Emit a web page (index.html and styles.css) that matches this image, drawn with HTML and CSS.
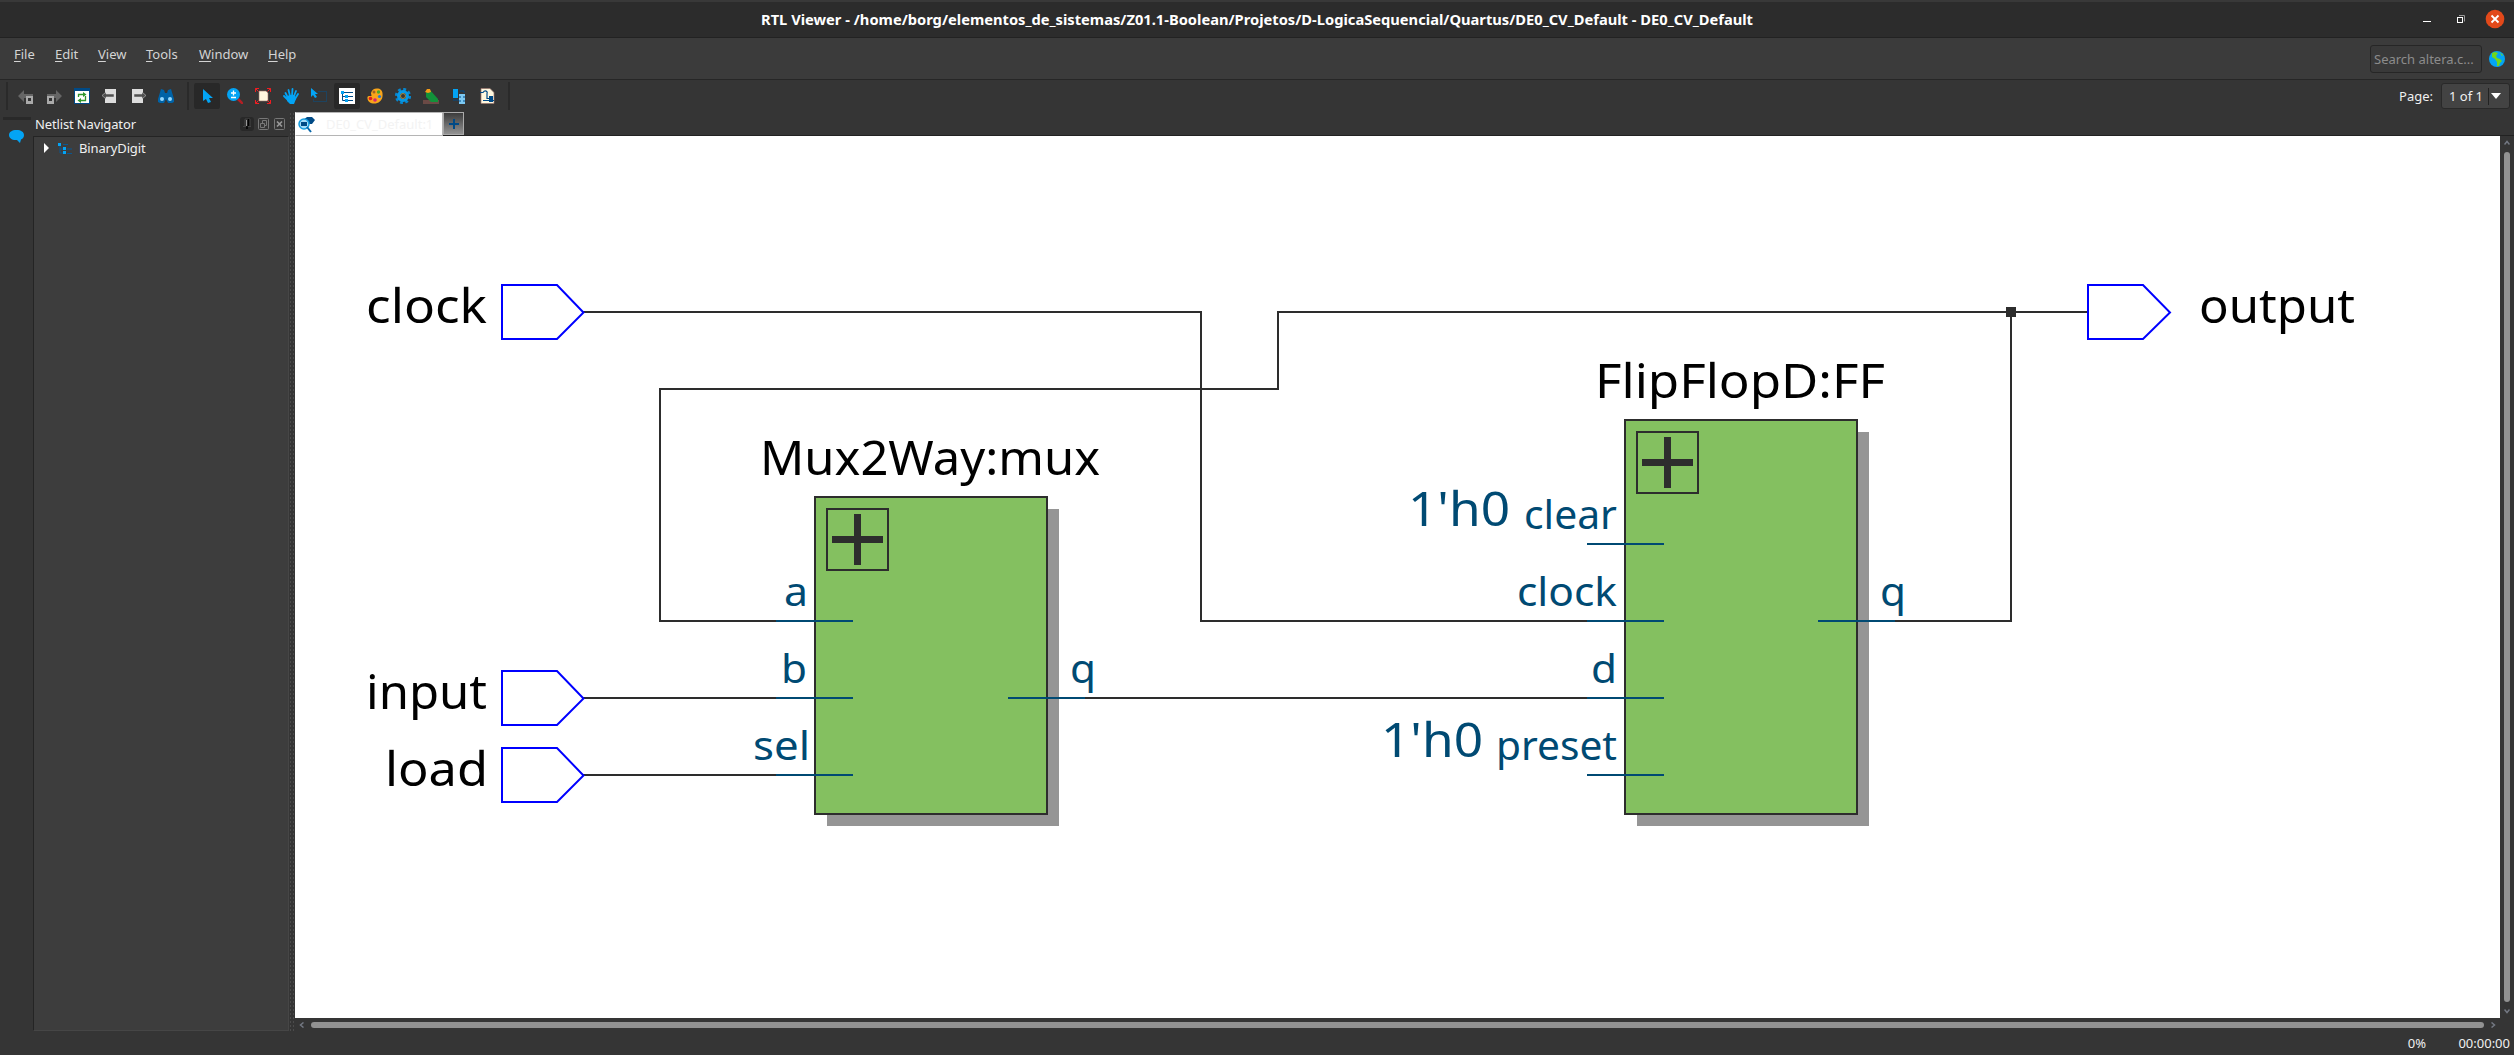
FILE: index.html
```html
<!DOCTYPE html>
<html lang="en">
<head>
<meta charset="utf-8">
<title>RTL Viewer</title>
<link rel="stylesheet" href="styles.css">
</head>
<body>
<header class="titlebar">
  <svg class="title-text" width="1000" height="34"><text x="4" y="23" textLength="992" lengthAdjust="spacingAndGlyphs">RTL Viewer - /home/borg/elementos_de_sistemas/Z01.1-Boolean/Projetos/D-LogicaSequencial/Quartus/DE0_CV_Default - DE0_CV_Default</text></svg>
  <svg class="window-buttons" width="96" height="34" viewBox="0 0 96 34">
    <path d="M5 19.500h8" stroke="#fff"/>
    <path d="M41 13.500h5.500v6" fill="none" stroke="#999"/>
    <rect x="39.500" y="15.500" width="5" height="5" fill="none" stroke="#fff"/>
    <circle cx="77" cy="17" r="9.300" fill="#e2491a"/>
    <path d="M73.500 13.500l7 7m0-7l-7 7" stroke="#fff" stroke-width="1.800"/>
  </svg>
</header>
<nav class="menubar">
  <div class="menus">
    <span class="menu m-file"><u>F</u>ile</span><span class="menu m-edit"><u>E</u>dit</span><span class="menu m-view"><u>V</u>iew</span><span class="menu m-tools"><u>T</u>ools</span><span class="menu m-window"><u>W</u>indow</span><span class="menu m-help"><u>H</u>elp</span>
  </div>
  <div class="search">Search altera.c...</div>
  <svg class="globe" width="16" height="16" viewBox="0 0 16 16"><circle cx="8" cy="8" r="8" fill="#03a4f5"/><path d="M3 2l3-1 3 1-2 3 1 2 3 1 2 2-2 2-1 3-2 0 0-4-2-3-3-2zM11 1.500l3 2.500-1 1z" fill="#6fd71c"/></svg>
</nav>
<div class="toolbar">
  <i class="sep"></i>
  <div class="tools">
    <span class="tool"><svg viewBox="0 0 16 16"><path d="M0 8l6-6v4h9v8H8v-4H6v4z" fill="#666"/><path d="M8 8h7v8H8z" fill="#aaa"/><path d="M10 10h3v3h-3z" fill="#333"/></svg></span>
    <span class="tool"><svg viewBox="0 0 16 16"><path d="M16 8l-6-6v4H1v8h7v-4h2v4z" fill="#666"/><path d="M1 8h7v8H1z" fill="#aaa"/><path d="M3 10h3v3H3z" fill="#333"/></svg></span>
    <span class="tool"><svg viewBox="0 0 16 16"><path d="M0 0h16v16H0z" fill="#004a86"/><path d="M1 3h14v12H1z" fill="#fff"/><path d="M4.500 9V6.500h6M11.500 8v4.500h-6" fill="none" stroke="#2f962c" stroke-width="1.300"/><path d="M9 4l3.500 2.500L9 9zM7 10l-3.500 2.500L7 15z" fill="#2f962c"/></svg></span>
    <span class="tool"><svg viewBox="0 0 16 16"><path d="M3 1h11v14H3z" fill="#ddd"/><path d="M0 7.500l4-3.500v2h8v3H4v2z" fill="#505050" stroke="#ddd" stroke-width=".5"/></svg></span>
    <span class="tool"><svg viewBox="0 0 16 16"><path d="M2 1h11v14H2z" fill="#ddd"/><path d="M16 7.500L12 4v2H4v3h8v2z" fill="#505050" stroke="#ddd" stroke-width=".5"/></svg></span>
    <span class="tool"><svg viewBox="0 0 16 16"><path d="M3 1l3 1 1 3h2l1-3 3-1 3 10v3l-2 1h-4l-2-4-2 4H2l-2-1v-3z" fill="#0063a7"/><circle cx="4" cy="11" r="2" fill="#93d8ff"/><circle cx="12" cy="11" r="2" fill="#93d8ff"/></svg></span>
  </div>
  <i class="sep"></i>
  <div class="tools">
    <span class="tool on"><svg viewBox="0 0 16 16"><path d="M4 1v12l3-2 2 4 3-1-2-4h4z" fill="#03a4f5"/></svg></span>
    <span class="tool"><svg viewBox="0 0 16 16"><path d="M11 11l5 5" stroke="#b51f24" stroke-width="2.500"/><circle cx="6.500" cy="6.500" r="6.500" fill="#03a4f5"/><path d="M6.500 2.500v5M4 5h5M4 9.500h5" stroke="#fff" stroke-width="1.300"/></svg></span>
    <span class="tool"><svg viewBox="0 0 16 16"><path d="M4 3h7l2 2v8H4z" fill="#fff8df" stroke="#9a746a" stroke-width=".6"/><path d="M.5 4V.5H4M.5.500l3 3M12 .5h3.500V4m0-3.500l-3 3M.5 12v3.500H4m-3.500 0l3-3m8.500 3h3.500V12m0 3.500l-3-3" fill="none" stroke="#f01d22"/></svg></span>
    <span class="tool"><svg viewBox="0 0 16 16"><path d="M5 10L2.500 5M7 8L5.500 2M9 8l.5-7M11 8l2-5M12 11l3-5M5 12L1 8" stroke="#03a4f5" stroke-width="1.800" stroke-linecap="round"/><path d="M4 9l2-2h6l1 4-2 5H7l-3-3z" fill="#03a4f5"/></svg></span>
    <span class="tool"><svg viewBox="0 0 16 16"><path d="M0 0v9l2-2 2 3 2-1-2-3h3z" fill="#03a4f5"/><path d="M7.500 3.500h8v10h-13v-3" fill="none" stroke="#07538a" stroke-dasharray="1 1"/></svg></span>
    <span class="tool on"><svg viewBox="0 0 16 16"><path d="M0 0h16v16H0z" fill="#fff"/><path d="M3.500 4v8.500H7M3.500 8.500H7M5 4.500h9M9 8.500h5M9 12.500h5" fill="none" stroke="#004a86"/><path d="M2 3h3v3H2zM6 7h3v3H6zM6 11h3v3H6z" fill="#03a4f5"/></svg></span>
    <span class="tool"><svg viewBox="0 0 16 16"><path d="M4 5C5 1 8 0 11 .5c4 .5 5 4 4.500 8C15 13 11 16 6 15.500 2 15 0 12 .5 9c1-2 4 0 4-1.500C4.500 7 4 6 4 5z" fill="#f9a51a"/><circle cx="3.500" cy="10.500" r="1.800" fill="#e02020"/><circle cx="7" cy="4" r="1.500" fill="#a06324"/><circle cx="11.500" cy="4" r="1.700" fill="#45a92c"/><circle cx="12.500" cy="8.500" r="1.600" fill="#287ad0"/><circle cx="8" cy="12" r="1.800" fill="#d62376"/></svg></span>
    <span class="tool"><svg viewBox="0 0 16 16"><circle cx="8" cy="8" r="6.600" fill="none" stroke="#0687cf" stroke-width="3" stroke-dasharray="2.800 2.384"/><circle cx="8" cy="8" r="4.500" fill="#353535" stroke="#0697e5" stroke-width="3"/><circle cx="8" cy="8" r="2.500" fill="none" stroke="#a88b3f"/></svg></span>
    <span class="tool"><svg viewBox="0 0 16 16"><path d="M0 12h16v4H0z" fill="#6a4a45"/><path d="M3 3l4-1 8 9v3H8L3 9z" fill="#12923a"/><path d="M2 4l2-3h3l1 3-3 1z" fill="#f59b17"/></svg></span>
    <span class="tool"><svg viewBox="0 0 16 16"><path d="M2 1h5v9H2z" fill="#03a4f5"/><path d="M8 6h6v10H8z" fill="#7cc9f3"/><path d="M2 12h6M9 3h4v2M8 9h2m2 0h2M8 13h2m2 0h2" fill="none" stroke="#004a86"/></svg></span>
    <span class="tool"><svg viewBox="0 0 16 16"><path d="M2 .5h9l4 4v11H2z" fill="#fff8df" stroke="#9a746a" stroke-width=".7"/><path d="M1 4.500h3c2-3 5-1 4 1v5h3M4 12.500h11" fill="none" stroke="#004a86" stroke-width="1.200"/><path d="M10 8h4v6h-4z" fill="#004a86"/></svg></span>
  </div>
  <i class="sep"></i>
  <span class="page-label">Page:</span>
  <div class="page-select"><span>1 of 1</span><i></i><svg width="10" height="6"><path d="M0 0h10L5 6z" fill="#fff"/></svg></div>
</div>
<main class="workspace">
  <aside class="strip"><i></i><svg width="15" height="13" viewBox="0 0 15 13"><path d="M7.500 0C12 0 15 2 15 5c0 2-1 4-3 4.500L11 13 8 10C3 10.500 0 8 0 5s3-5 7.500-5z" fill="#03a4f5"/></svg></aside>
  <section class="dock">
    <div class="dock-head"><span class="dock-title">Netlist Navigator</span>
      <svg class="dock-buttons" width="45" height="14" viewBox="0 0 45 14"><rect width="14" height="14" rx="3" fill="#282828"/><path d="M5 9V2h5v7M3 9.500h8" fill="none" stroke="#444"/><path d="M8.500 2v7M7 9v3" stroke="#000" stroke-width="1.500"/><path d="M6.500 3v6" stroke="#999"/><g fill="none" stroke="#777"><rect x="18.500" y="1.500" width="10" height="11" rx="1"/><path d="M22.500 6V3.500h4v5h-2M20.500 6.500h4v4h-4z"/><rect x="34.500" y="1.500" width="10" height="11" rx="1"/><path d="M37 4.500l5 5m0-5l-5 5" stroke="#999" stroke-width="1.700"/></g></svg>
    </div>
    <div class="tree"><div class="tree-row"><svg width="5" height="10"><path d="M0 0l5 5-5 5z" fill="#fff"/></svg><svg class="tree-icon" width="14" height="12" viewBox="0 0 14 12"><path d="M2 2v8h4M2 6h4M5 1.500h5M9 6h5M9 10.500h5" fill="none" stroke="#0b5790"/><path d="M0 0h3v3H0zM5 4h3v3H5zM5 8h3v3H5z" fill="#03a4f5"/></svg><span class="tree-name">BinaryDigit</span></div></div>
  </section>
  <div class="splitter"></div>
  <section class="viewer">
    <div class="tabs">
      <div class="tab"><svg width="17" height="17" viewBox="0 0 17 17"><path d="M5 4l4-3h5l3 3-3 4H9z" fill="#004a86"/><circle cx="6" cy="8" r="5" fill="#a5dcf8" stroke="#159de0" stroke-width="1.500"/><path d="M3 6h6v4H3z" fill="#004a86"/><path d="M9 11l4 5" stroke="#0867a9" stroke-width="2"/></svg><span>DE0_CV_Default:1</span></div>
      <div class="tab-add"><svg width="10" height="10"><path d="M5 0v10M0 5h10" stroke="#004a86" stroke-width="2"/></svg></div>
    </div>
    <div class="canvas-row">
      <svg class="schematic" width="2205" height="882" viewBox="295 136 2205 882">
        <g class="shadow"><path d="M827 509h232v317H827zM1637 432h232v394h-232z"/></g>
        <g class="wire"><path d="M583 312H1201V621H1588"/><path d="M777 621H660V389H1278V312H2088"/><path d="M583 698H777M583 775H777M1084 698H1588M1894 621H2011V312"/></g>
        <g class="block"><path d="M815 497h232v317H815zM1625 420h232v394h-232z"/></g>
        <g class="expand"><path class="frame" d="M827 509h61v61h-61zM1637 432h61v61h-61z"/><path class="cross" d="M832 539.500h51M857.500 514v51M1642 462.500h51M1667.500 437v51"/></g>
        <path class="pin" d="M776 621h77M776 698h77M776 775h77M1008 698h77M1587 544h77M1587 621h77M1587 698h77M1587 775h77M1818 621h77"/>
        <path class="node" d="M2006 307h10v10h-10z"/>
        <path class="port" d="M502 285h55l26.500 27.500L557 339h-55zM502 671h55l26.500 27.500L557 725h-55zM502 748h55l26.500 27.500L557 802h-55zM2088 285h55l27 27.500L2143 339h-55z"/>
        <g class="name">
          <text x="366" y="323" textLength="121" lengthAdjust="spacingAndGlyphs">clock</text>
          <text x="366" y="709" textLength="121" lengthAdjust="spacingAndGlyphs">input</text>
          <text x="385" y="786" textLength="103" lengthAdjust="spacingAndGlyphs">load</text>
          <text x="760" y="475" textLength="340" lengthAdjust="spacingAndGlyphs">Mux2Way:mux</text>
          <text x="1595" y="398" textLength="290" lengthAdjust="spacingAndGlyphs">FlipFlopD:FF</text>
          <text x="2199" y="323" textLength="156" lengthAdjust="spacingAndGlyphs">output</text>
        </g>
        <g class="const">
          <text x="1408" y="526" textLength="102" lengthAdjust="spacingAndGlyphs">1'h0</text>
          <text x="1381" y="757" textLength="102" lengthAdjust="spacingAndGlyphs">1'h0</text>
        </g>
        <g class="pin-name">
          <text x="784" y="606" textLength="24" lengthAdjust="spacingAndGlyphs">a</text>
          <text x="781" y="683" textLength="26" lengthAdjust="spacingAndGlyphs">b</text>
          <text x="753" y="760" textLength="57" lengthAdjust="spacingAndGlyphs">sel</text>
          <text x="1070" y="683" textLength="26" lengthAdjust="spacingAndGlyphs">q</text>
          <text x="1524" y="529" textLength="93" lengthAdjust="spacingAndGlyphs">clear</text>
          <text x="1517" y="606" textLength="100" lengthAdjust="spacingAndGlyphs">clock</text>
          <text x="1591" y="683" textLength="26" lengthAdjust="spacingAndGlyphs">d</text>
          <text x="1496" y="760" textLength="121" lengthAdjust="spacingAndGlyphs">preset</text>
          <text x="1880" y="606" textLength="26" lengthAdjust="spacingAndGlyphs">q</text>
        </g>
      </svg>
      <div class="vscroll"><svg width="6" height="5"><path d="M.5 4.500L3 1.500l2.500 3"/></svg><i></i><svg width="6" height="5"><path d="M.5.500L3 3.500 5.500.500"/></svg></div>
    </div>
    <div class="hscroll"><svg width="5" height="6"><path d="M4.500.500L1.500 3l3 2.500"/></svg><i></i><svg width="5" height="6"><path d="M.5.500L3.500 3l-3 2.500"/></svg></div>
  </section>
</main>
<footer class="status"><span class="pct">0%</span><span class="time">00:00:00</span></footer>
</body>
</html>
```
FILE: styles.css
```css
* { box-sizing: border-box; }
body {
  margin: 0;
  height: 1055px;
  display: flex;
  flex-direction: column;
  overflow: hidden;
  background: #353535;
  color: #f0f0f0;
  font: 13px/16px "Noto Sans", sans-serif;
}
svg { display: block; flex: none; }
i { display: block; flex: none; }

.titlebar {
  height: 38px;
  flex: none;
  display: grid;
  grid-template-columns: 1fr 1000px 1fr;
  border-top: 2px solid #393939;
  border-bottom: 1px solid #222;
  background: #2c2c2c;
}
.titlebar .title-text { grid-column: 2; }
.title-text text { font: bold 14px "Noto Sans", sans-serif; fill: #fff; }
.window-buttons { justify-self: end; }

.menubar {
  height: 42px;
  flex: none;
  display: flex;
  padding: 7px 9px 0 14px;
  border-bottom: 1px solid #262626;
  background: #3b3b3b;
  color: #d4d4d4;
}
.menus { display: flex; flex: 1; padding-top: 1px; }
.menu { white-space: nowrap; }
.menu u { text-underline-offset: 2px; }
.m-file { width: 41px; }
.m-edit { width: 43px; }
.m-view { width: 48px; }
.m-tools { width: 53px; }
.m-window { width: 69px; }
.search {
  width: 112px;
  height: 28px;
  margin-right: 7px;
  padding: 5px 3px;
  border: 1px solid #262626;
  border-radius: 3px;
  background: #393939;
  color: #8c8c8c;
  white-space: nowrap;
}
.globe { margin-top: 6px; }

.toolbar {
  height: 32px;
  flex: none;
  display: flex;
  align-items: center;
  padding: 0 4px 0 6px;
}
.sep { width: 2px; height: 28px; background: #2a2a2a; }
.tools { display: flex; padding: 0 7px 0 4px; }
.tool { width: 28px; height: 26px; display: grid; place-items: center; }
.tool.on { background: #282828; border-radius: 3px; background-clip: content-box; padding: 0 1px; }
.tool svg { width: 16px; height: 16px; }
.page-label { margin-left: auto; margin-right: 8px; }
.page-select {
  width: 69px;
  height: 26px;
  display: flex;
  align-items: center;
  padding: 0 8px 0 7px;
  border: 1px solid #292929;
  border-radius: 3px;
  background: #434343;
  white-space: nowrap;
}
.page-select span { width: 39px; }
.page-select i { width: 1px; height: 17px; margin-right: 2px; background: #222; }

.workspace { height: 919px; flex: none; display: flex; }
.strip { width: 33px; padding: 5px 2px 0 3px; }
.strip i { height: 3px; background: #292929; }
.strip svg { margin: 10px 0 0 6px; }
.dock { width: 256px; display: flex; flex-direction: column; }
.dock-head { height: 24px; display: flex; align-items: center; padding: 0 4px 0 2px; }
.dock-title { flex: 1; letter-spacing: -.14px; }
.tree {
  height: 895px;
  padding: 3px 10px;
  border: 1px solid #464646;
  border-top-color: #242424;
  border-left-color: #242424;
  background: #3d3d3d;
}
.tree-row { display: flex; align-items: center; }
.tree-icon { margin: 2px 7px 0 9px; }
.tree-name { letter-spacing: -.14px; }
.splitter {
  width: 6px;
  background: radial-gradient(circle, #4c4c4c 0 .7px, transparent 1px) 0 0 / 3px 4px;
}
.viewer { flex: 1; min-width: 0; }
.tabs { height: 24px; display: flex; border-bottom: 1px solid #222; }
.tab {
  width: 148px;
  height: 24px;
  display: flex;
  align-items: center;
  gap: 11px;
  padding-left: 2px;
  border: 1px solid #b5b5b5;
  border-left-color: #fff;
  background: #fff;
  color: #f3f3f3;
  white-space: nowrap;
}
.tab-add {
  width: 21px;
  height: 23px;
  display: grid;
  place-items: center;
  border: 1px solid #aaa;
  background: linear-gradient(#3c3c3c, #929292);
}
.canvas-row { display: flex; height: 882px; }
.schematic { background: #fff; }
.shadow { fill: #959595; }
.wire { fill: none; stroke: #2d2d2d; stroke-width: 2; }
.block { fill: #84c060; stroke: #2d2d2d; stroke-width: 2; }
.frame { fill: none; stroke: #2d2d2d; stroke-width: 2; }
.cross { stroke: #2d2d2d; stroke-width: 7; }
.pin { stroke: #004a73; stroke-width: 2; }
.node { fill: #2d2d2d; }
.port { fill: none; stroke: #00f; stroke-width: 2; }
.name { font-size: 48px; fill: #000; }
.const { font-size: 48px; fill: #004a73; }
.pin-name { font-size: 40px; fill: #004a73; }

.vscroll {
  width: 14px;
  display: flex;
  flex-direction: column;
  align-items: center;
  padding-top: 4px;
}
.vscroll i { width: 6px; height: 850px; margin: 7px 0; border-radius: 3px; background: #929292; }
.hscroll {
  height: 13px;
  display: flex;
  align-items: center;
  padding-left: 4px;
}
.hscroll i { width: 2173px; height: 6px; margin: 0 7px; border-radius: 3px; background: #929292; }
.vscroll path, .hscroll path { fill: none; stroke: #737883; stroke-width: 1.500; }
.status { flex: 1; display: flex; justify-content: flex-end; padding: 4px 4px 0; white-space: nowrap; }
.time { width: 84px; text-align: right; }
```
